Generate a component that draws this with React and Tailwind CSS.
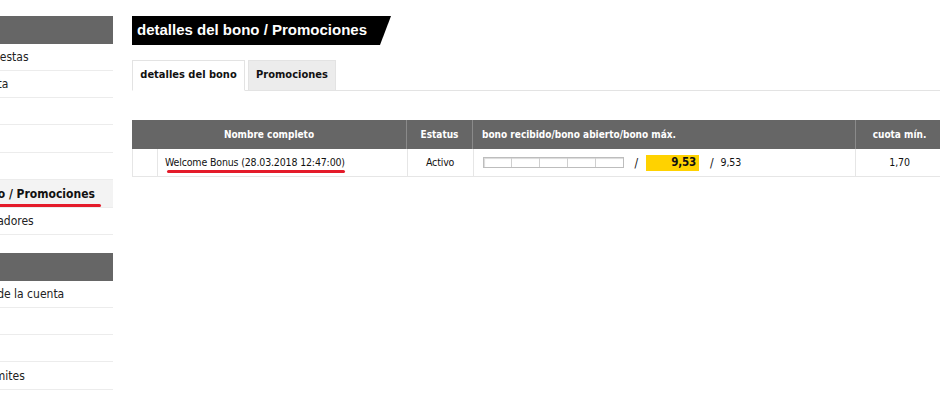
import React from 'react'

const font = "font-['Tahoma','DejaVu_Sans_Condensed','Liberation_Sans',sans-serif]"

const sideTop = [
  { label: 'Mi historial de apuestas', h: 'h-[27px]' },
  { label: 'Extractos de cuenta', h: 'h-[27px]' },
  { label: 'Depósito', h: 'h-[27px]' },
  { label: 'Retiro', h: 'h-[28px]' },
  { label: 'Mensajes', h: 'h-[27px]' },
  { label: 'detalles del bono / Promociones', h: 'h-[28px]', active: true },
  { label: 'Invitar nuevos jugadores', h: 'h-[27px]' },
]

const sideBottom = [
  { label: 'Datos personales de la cuenta', h: 'h-[27px]' },
  { label: 'Contraseña', h: 'h-[27px]' },
  { label: 'Documentos', h: 'h-[27px]' },
  { label: 'Autoexclusión y límites', h: 'h-[28px]' },
]

function SideItem({ item }) {
  return (
    <div
      className={
        item.h +
        ' flex items-center border-b border-[#ececec] text-[12px] whitespace-nowrap ' +
        (item.active ? 'bg-[#f3f3f3] font-bold text-[#111]' : 'text-[#222]')
      }
    >
      <span className="relative pl-[6px]">
        {item.label}
        {item.active && (
          <span className="absolute left-[60px] right-[-6px] bottom-[-4px] h-[3px] rounded-full bg-[#e41b2a]" />
        )}
      </span>
    </div>
  )
}

function Sidebar() {
  return (
    <div className="w-[113px] shrink-0 overflow-hidden pt-4">
      <div className="ml-[-106px] w-[219px]">
        <div className="h-[28px] bg-[#666666]" />
        {sideTop.map((it, i) => (
          <SideItem key={i} item={it} />
        ))}
        <div className="h-[18px]" />
        <div className="h-[28px] bg-[#666666]" />
        {sideBottom.map((it, i) => (
          <SideItem key={i} item={it} />
        ))}
      </div>
    </div>
  )
}

function ProgressBar() {
  return (
    <div className="flex w-[141px] h-[11px] border border-[#bdbdbd] bg-white shadow-[inset_1px_1px_1px_rgba(0,0,0,0.15)]">
      {[0, 1, 2, 3, 4].map((i) => (
        <div key={i} className={'flex-1 ' + (i < 4 ? 'border-r border-[#cfcfcf]' : '')} />
      ))}
    </div>
  )
}

export default function App() {
  return (
    <div className={'w-[940px] h-[400px] overflow-hidden bg-white ' + font}>
      <div className="flex w-[1100px]">
        <Sidebar />

        <div className="ml-[19px] w-[811px] pt-4">
          {/* title */}
          <div className="w-[259px] h-[29px] bg-black text-white flex items-center pl-[5px] [clip-path:polygon(0_0,100%_0,calc(100%-11px)_100%,0_100%)]">
            <span className="font-['Liberation_Sans',Arial,sans-serif] font-bold text-[15px]">
              detalles del bono / Promociones
            </span>
          </div>

          {/* tabs */}
          <div className="mt-[15px] flex items-end border-b border-[#e3e3e3] h-[31px]">
            <div className="w-[113px] h-[31px] flex items-center justify-center bg-white border border-[#e3e3e3] border-b-white -mb-px text-[11px] font-bold text-[#111]">
              detalles del bono
            </div>
            <div className="ml-[3px] w-[88px] h-[30px] flex items-center justify-center bg-[#ececec] border border-[#e3e3e3] border-b-0 text-[11px] font-bold text-[#111]">
              Promociones
            </div>
          </div>

          {/* table */}
          <div className="mt-[29px]">
            <div className="flex h-[29px] bg-[#666666] text-white font-bold text-[10px]">
              <div className="w-[274px] flex items-center justify-center">Nombre completo</div>
              <div className="w-[66px] flex items-center justify-center border-l border-[#8a8a8a]">Estatus</div>
              <div className="w-[383px] flex items-center pl-[9px] border-l border-[#8a8a8a]">
                bono recibido/bono abierto/bono máx.
              </div>
              <div className="w-[88px] flex items-center justify-center border-l border-[#8a8a8a]">cuota mín.</div>
            </div>
            <div className="flex h-[28px] border-b border-l border-[#e6e6e6] text-[#111] text-[10.5px] tracking-[-0.15px]">
              <div className="w-[24px]" />
              <div className="w-[250px] flex items-center pl-[7px] border-l border-[#e6e6e6]">
                <span className="relative">
                  Welcome Bonus (28.03.2018 12:47:00)
                  <span className="absolute left-[2px] right-[0px] bottom-[-3px] h-[3px] rounded-full bg-[#e41b2a]" />
                </span>
              </div>
              <div className="w-[66px] flex items-center justify-center border-l border-[#e6e6e6]">Activo</div>
              <div className="w-[383px] flex items-center pl-[9px] border-l border-[#e6e6e6]">
                <ProgressBar />
                <span className="ml-[11px] text-[12px]">/</span>
                <span className="ml-[8px] w-[53px] h-[16px] bg-[#ffd200] flex items-center justify-end pr-[3px] font-bold text-[11.5px]">
                  9,53
                </span>
                <span className="ml-[11px] text-[12px]">/</span>
                <span className="ml-[7px]">9,53</span>
              </div>
              <div className="w-[88px] flex items-center justify-center border-l border-[#e6e6e6]">1,70</div>
            </div>
          </div>
        </div>
      </div>
    </div>
  )
}
